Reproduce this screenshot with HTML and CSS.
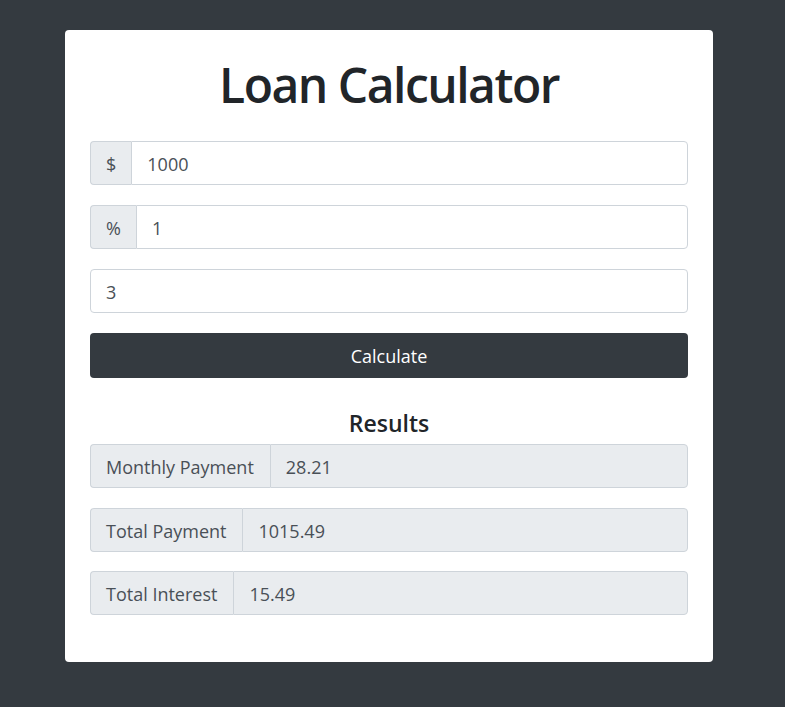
FILE: index.html
```html
<!DOCTYPE html>
<html lang="en">
<head>
<meta charset="utf-8">
<title>Loan Calculator</title>
<link rel="stylesheet" href="styles.css">
</head>
<body>
<div class="card">
  <h1 class="title">Loan Calculator</h1>
  <form class="form">
    <div class="group">
      <span class="addon">$</span>
      <input class="field" type="text" value="1000">
    </div>
    <div class="group">
      <span class="addon">%</span>
      <input class="field" type="text" value="1">
    </div>
    <div class="group">
      <input class="field solo" type="text" value="3">
    </div>
    <button class="btn" type="button">Calculate</button>
  </form>
  <div class="results">
    <h3 class="results-title">Results</h3>
    <div class="group result">
      <span class="addon label">Monthly Payment</span>
      <input class="field readonly" type="text" value="28.21" disabled>
    </div>
    <div class="group result">
      <span class="addon label">Total Payment</span>
      <input class="field readonly" type="text" value="1015.49" disabled>
    </div>
    <div class="group result">
      <span class="addon label">Total Interest</span>
      <input class="field readonly" type="text" value="15.49" disabled>
    </div>
  </div>
</div>
</body>
</html>
```
FILE: styles.css
```css
* { box-sizing: border-box; }
html, body {
  margin: 0;
  padding: 0;
  background: #343a40;
  font-family: "Open Sans", "Noto Sans", sans-serif;
  color: #212529;
}
body { padding-top: 30px; }
.card {
  width: 648px;
  margin-left: 65px;
  background: #fff;
  border-radius: 4px;
  padding: 24px 25px 27px;
}
.title {
  margin: 0 0 25px;
  text-align: center;
  font-size: 48px;
  font-weight: 600;
  letter-spacing: -1.5px;
  line-height: 62px;
  color: #212529;
}
.form { display: flex; flex-direction: column; }
.group {
  display: flex;
  height: 44px;
  margin-bottom: 20px;
}
.addon {
  display: flex;
  align-items: center;
  padding: 2px 15px 0;
  background: #e9ecef;
  border: 1px solid #ced4da;
  border-right: none;
  border-radius: 4px 0 0 4px;
  font-size: 18px;
  color: #495057;
}
.label { padding-right: 16px; }
.field {
  flex: 1;
  min-width: 0;
  height: 100%;
  border: 1px solid #ced4da;
  border-radius: 0 4px 4px 0;
  padding: 2px 15px 0;
  font-family: inherit;
  font-size: 18px;
  color: #495057;
  background: #fff;
  outline: none;
}
.field.solo { border-radius: 4px; }
.field.readonly {
  background: #e9ecef;
  color: #495057;
  -webkit-text-fill-color: #495057;
  opacity: 1;
}
.btn {
  height: 45px;
  margin-bottom: 31px;
  border: none;
  border-radius: 4px;
  background: #343a40;
  color: #fff;
  font-family: inherit;
  font-size: 18px;
}
.results-title {
  margin: 0 0 7px;
  text-align: center;
  font-size: 23px;
  font-weight: 600;
  line-height: 28px;
}
.result { margin-bottom: 19.5px; }
```
